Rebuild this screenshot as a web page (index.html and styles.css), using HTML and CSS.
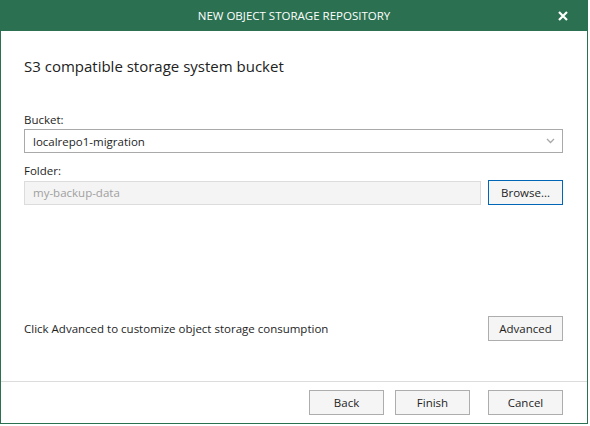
FILE: index.html
```html
<!DOCTYPE html>
<html>
<head>
<meta charset="utf-8">
<link rel="stylesheet" href="styles.css">
</head>
<body>
<div class="window">
  <div class="titlebar">
    <span class="title">NEW OBJECT STORAGE REPOSITORY</span>
    <span class="close">
      <svg width="10" height="10" viewBox="0 0 10 10"><path d="M1 1L9 9M9 1L1 9" stroke="#fff" stroke-width="2.2" stroke-linecap="butt"/></svg>
    </span>
  </div>
  <div class="content">
    <h1 class="heading">S3 compatible storage system bucket</h1>
    <div class="field">
      <label class="label">Bucket:</label>
      <div class="select">
        <span>localrepo1-migration</span>
        <svg class="chev" width="9" height="6" viewBox="0 0 9 6"><path d="M1 1L4.5 4.5L8 1" fill="none" stroke="#a8a8a8" stroke-width="1.3"/></svg>
      </div>
    </div>
    <div class="field">
      <label class="label">Folder:</label>
      <div class="row">
        <div class="input disabled">my-backup-data</div>
        <button class="btn focused">Browse...</button>
      </div>
    </div>
    <div class="spacer"></div>
    <div class="row advanced-row">
      <span class="hint">Click Advanced to customize object storage consumption</span>
      <button class="btn">Advanced</button>
    </div>
  </div>
  <div class="footer">
    <button class="btn">Back</button>
    <button class="btn">Finish</button>
    <button class="btn cancel">Cancel</button>
  </div>
</div>
</body>
</html>
```
FILE: styles.css
```css
html, body {
  margin: 0;
  padding: 0;
  background: #fff;
}
body {
  font-family: "Open Sans", "Noto Sans", sans-serif;
  font-size: 11.5px;
  color: #1e1e1e;
}
.window {
  box-sizing: border-box;
  width: 588px;
  height: 424px;
  border: 1px solid #2b7151;
  border-top: none;
  display: flex;
  flex-direction: column;
  background: #fff;
}
.titlebar {
  height: 31px;
  background: #2b7151;
  margin: 0 -1px;
  display: flex;
  align-items: center;
  justify-content: center;
  position: relative;
  color: #fff;
}
.title {
  font-size: 11.5px;
}
.close {
  position: absolute;
  right: 20px;
  top: 11px;
  width: 10px;
  height: 10px;
  display: flex;
}
.content {
  flex: 1;
  display: flex;
  flex-direction: column;
  padding: 0 24px 0 23px;
}
.heading {
  margin: 24px 0 0 0;
  font-size: 15px;
  font-weight: normal;
  line-height: 22px;
  color: #222;
}
.field {
  display: flex;
  flex-direction: column;
}
.heading + .field {
  margin-top: 35px;
}
.label {
  line-height: 15px;
  margin-bottom: 2px;
}
.field + .field {
  margin-top: 10px;
}
.select {
  box-sizing: border-box;
  height: 24px;
  border: 1px solid #a9a9a9;
  display: flex;
  align-items: center;
  justify-content: space-between;
  padding: 0 7px 0 8px;
}
.row {
  display: flex;
  align-items: center;
  justify-content: space-between;
}
.input {
  box-sizing: border-box;
  width: 457px;
  height: 24px;
  display: flex;
  align-items: center;
  padding: 0 8px;
}
.input.disabled {
  background: #f4f4f4;
  border: 1px solid #dcdcdc;
  color: #a0a0a0;
}
.btn {
  box-sizing: border-box;
  width: 75px;
  height: 25px;
  background: #f5f5f5;
  border: 1px solid #adadad;
  font-family: inherit;
  font-size: 11.5px;
  color: #1e1e1e;
  padding: 0;
  margin: 0;
}
.btn.focused {
  border-color: #0067b8;
}
.spacer {
  flex: 1;
}
.advanced-row {
  margin-bottom: 40px;
}
.footer {
  border-top: 1px solid #dcdcdc;
  height: 42px;
  box-sizing: border-box;
  display: flex;
  justify-content: flex-end;
  align-items: flex-start;
  padding: 8px 24px 0 0;
  gap: 11px;
}
.footer .cancel {
  margin-left: 7px;
}
```
